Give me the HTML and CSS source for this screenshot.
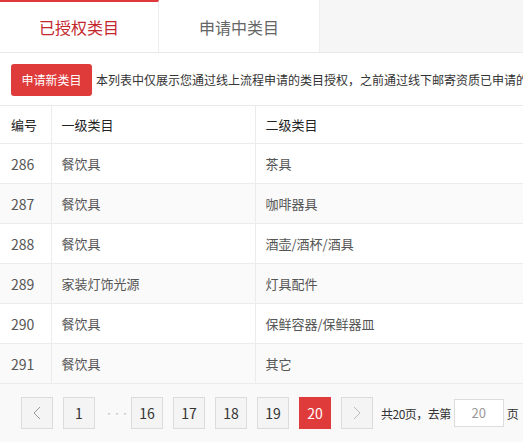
FILE: index.html
```html
<!DOCTYPE html>
<html lang="zh-CN">
<head>
<meta charset="utf-8">
<title>已授权类目</title>
<link rel="stylesheet" href="styles.css">
</head>
<body>
<div class="page">
  <div class="tabs">
    <div class="tab tab-active">已授权类目</div>
    <div class="tab">申请中类目</div>
    <div class="tab-rest"></div>
  </div>
  <div class="toolbar">
    <button class="btn-apply">申请新类目</button>
    <span class="notice">本列表中仅展示您通过线上流程申请的类目授权，之前通过线下邮寄资质已申请的</span>
  </div>
  <table class="grid">
    <colgroup><col class="c1"><col class="c2"><col class="c3"></colgroup>
    <thead>
      <tr><th>编号</th><th>一级类目</th><th>二级类目</th></tr>
    </thead>
    <tbody>
      <tr><td>286</td><td>餐饮具</td><td>茶具</td></tr>
      <tr><td>287</td><td>餐饮具</td><td>咖啡器具</td></tr>
      <tr><td>288</td><td>餐饮具</td><td>酒壶/酒杯/酒具</td></tr>
      <tr><td>289</td><td>家装灯饰光源</td><td>灯具配件</td></tr>
      <tr><td>290</td><td>餐饮具</td><td>保鲜容器/保鲜器皿</td></tr>
      <tr><td>291</td><td>餐饮具</td><td>其它</td></tr>
    </tbody>
  </table>
  <div class="pager">
    <span class="pg pg-arrow"><svg width="8" height="14" viewBox="0 0 8 14"><path d="M7 1 L1 7 L7 13" fill="none" stroke="#999" stroke-width="1"/></svg></span>
    <span class="pg">1</span>
    <span class="pg-dots">···</span>
    <span class="pg">16</span>
    <span class="pg">17</span>
    <span class="pg">18</span>
    <span class="pg">19</span>
    <span class="pg pg-cur">20</span>
    <span class="pg pg-arrow"><svg width="8" height="14" viewBox="0 0 8 14"><path d="M1 1 L7 7 L1 13" fill="none" stroke="#bbb" stroke-width="1"/></svg></span>
    <span class="pg-jump">
      <span class="pg-total">共20页，去第</span>
      <span class="pg-input">20</span>
      <span class="pg-unit">页</span>
    </span>
  </div>
</div>
</body>
</html>
```
FILE: styles.css
```css
html, body {
  margin: 0;
  padding: 0;
  background: #fff;
}
body {
  font-family: "Noto Sans CJK SC", "Noto Sans", sans-serif;
  color: #333;
  overflow: hidden;
}
.page {
  width: 523px;
  height: 442px;
  overflow: hidden;
}
.tabs {
  display: flex;
  height: 52px;
  border-bottom: 1px solid #e9e9e9;
  background: #f6f6f6;
}
.tab {
  width: 160px;
  box-sizing: border-box;
  background: #fff;
  font-size: 16px;
  text-align: center;
  color: #666;
  border-top: 2px solid transparent;
  line-height: 50px;
}
.tab-active {
  width: 159px;
  border-top-color: #e0393b;
  border-right: 1px solid #eeeeee;
  color: #c3262c;
}
.tab-rest {
  flex: 1;
  border-left: 1px solid #eeeeee;
}
.toolbar {
  display: flex;
  align-items: center;
  padding: 11px 0 9px 11px;
  border-bottom: 1px solid #e9e9e9;
  white-space: nowrap;
  overflow: hidden;
}
.btn-apply {
  flex: none;
  width: 81px;
  height: 32px;
  padding: 0;
  border: none;
  border-radius: 3px;
  background: #e03b3b;
  color: #fff;
  font-family: inherit;
  font-size: 12px;
  line-height: 32px;
}
.notice {
  margin-left: 4px;
  font-size: 12px;
  line-height: 16px;
  color: #333;
}
.grid {
  width: 523px;
  border-collapse: collapse;
  table-layout: fixed;
}
.c1 { width: 51px; }
.c2 { width: 204px; }
.grid th, .grid td {
  text-align: left;
  padding: 0 0 0 10px;
  border-bottom: 1px solid #ececec;
  border-left: 1px solid #ececec;
  white-space: nowrap;
  overflow: hidden;
}
.grid th:first-child, .grid td:first-child {
  border-left: none;
  padding-left: 11px;
}
.grid th {
  height: 37px;
  font-size: 13px;
  font-weight: normal;
  color: #222;
}
.grid td {
  height: 39px;
  font-size: 13px;
  color: #555;
}
.grid td:first-child {
  font-size: 14px;
}
.grid tbody tr:nth-child(even) td {
  background: #fafafa;
}
.pager {
  display: flex;
  align-items: center;
  gap: 10px;
  height: 58px;
  padding: 0 0 0 21px;
  background: #f9f9f9;
  white-space: nowrap;
}
.pg {
  flex: none;
  box-sizing: border-box;
  width: 32px;
  height: 32px;
  border: 1px solid #dcdcdc;
  background: #f4f4f4;
  display: flex;
  align-items: center;
  justify-content: center;
  font-size: 14px;
  color: #333;
}
.pg-cur {
  background: #e03b3b;
  border-color: #e03b3b;
  color: #fff;
}
.pg-dots {
  flex: none;
  width: 16px;
  text-align: center;
  font-size: 8px;
  color: #bbb;
}
.pg-jump {
  display: flex;
  align-items: center;
  gap: 3px;
  margin-left: -2px;
}
.pg-total {
  font-size: 12px;
  letter-spacing: -0.5px;
  color: #333;
}
.pg-input {
  flex: none;
  box-sizing: border-box;
  width: 50px;
  height: 28px;
  border: 1px solid #dcdcdc;
  background: #fff;
  font-size: 13px;
  line-height: 26px;
  text-align: center;
  color: #999;
}
.pg-unit {
  font-size: 12px;
  color: #333;
}
```
